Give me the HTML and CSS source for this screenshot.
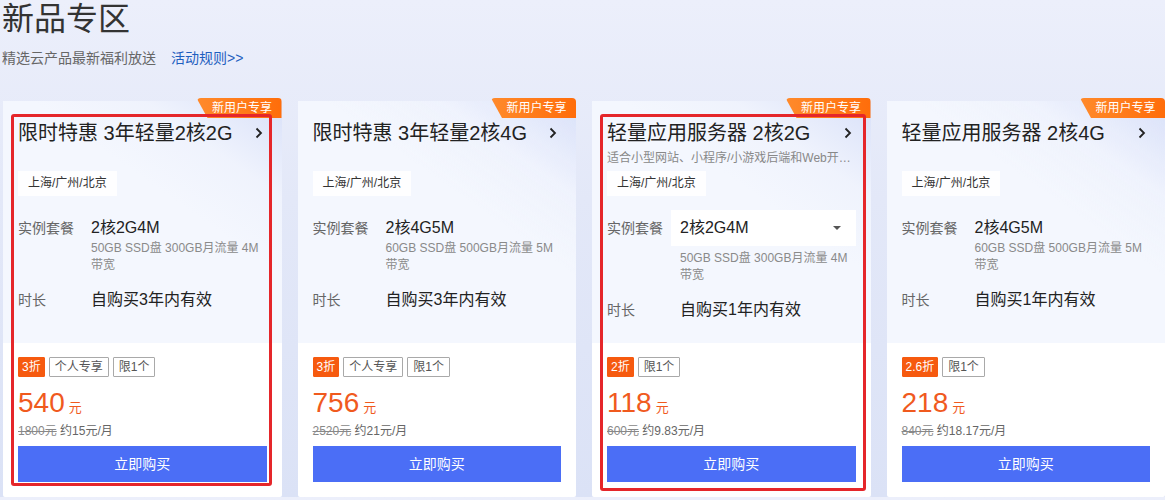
FILE: index.html
```html
<!DOCTYPE html>
<html lang="zh-CN">
<head>
    <meta charset="UTF-8">
    <meta name="viewport" content="width=device-width, initial-scale=1.0">
    <title>新品专区</title>
    <link rel="stylesheet" href="styles.css">
</head>
<body>

    <!-- Section heading -->
    <header class="section-head">
        <h1 class="section-title">新品专区</h1>
        <p class="section-sub">精选云产品最新福利放送<a class="rule-link" href="#">活动规则&gt;&gt;</a></p>
    </header>

    <!-- Product cards -->
    <div class="card-list">

        <div class="card">
            <span class="card-badge">新用户专享</span>
            <div class="card-top">
                <div class="card-head">
                    <div class="card-title">
                        <span>限时特惠 3年轻量2核2G</span>
                        <svg class="chevron" viewBox="0 0 10 12" width="10" height="12"><polyline points="2.5,1.5 7,6 2.5,10.5" /></svg>
                    </div>
                </div>
                <span class="region">上海/广州/北京</span>
                <div class="spec-row">
                    <span class="spec-label">实例套餐</span>
                    <div class="spec-body">
                        <div class="spec-value">2核2G4M</div>
                        <div class="spec-detail">50GB SSD盘 300GB月流量 4M<br>带宽</div>
                    </div>
                </div>
                <div class="spec-row">
                    <span class="spec-label">时长</span>
                    <div class="spec-body">
                        <div class="spec-value">自购买3年内有效</div>
                    </div>
                </div>
            </div>
            <div class="card-bottom">
                <div class="tags">
                    <span class="tag tag-off">3折</span>
                    <span class="tag">个人专享</span>
                    <span class="tag">限1个</span>
                </div>
                <div class="price"><span class="price-num">540</span><span class="price-unit">元</span></div>
                <div class="price-orig"><s>1800元</s> 约15元/月</div>
                <a class="buy-btn" href="#">立即购买</a>
            </div>
            <div class="highlight"></div>
        </div>

        <div class="card">
            <span class="card-badge">新用户专享</span>
            <div class="card-top">
                <div class="card-head">
                    <div class="card-title">
                        <span>限时特惠 3年轻量2核4G</span>
                        <svg class="chevron" viewBox="0 0 10 12" width="10" height="12"><polyline points="2.5,1.5 7,6 2.5,10.5" /></svg>
                    </div>
                </div>
                <span class="region">上海/广州/北京</span>
                <div class="spec-row">
                    <span class="spec-label">实例套餐</span>
                    <div class="spec-body">
                        <div class="spec-value">2核4G5M</div>
                        <div class="spec-detail">60GB SSD盘 500GB月流量 5M<br>带宽</div>
                    </div>
                </div>
                <div class="spec-row">
                    <span class="spec-label">时长</span>
                    <div class="spec-body">
                        <div class="spec-value">自购买3年内有效</div>
                    </div>
                </div>
            </div>
            <div class="card-bottom">
                <div class="tags">
                    <span class="tag tag-off">3折</span>
                    <span class="tag">个人专享</span>
                    <span class="tag">限1个</span>
                </div>
                <div class="price"><span class="price-num">756</span><span class="price-unit">元</span></div>
                <div class="price-orig"><s>2520元</s> 约21元/月</div>
                <a class="buy-btn" href="#">立即购买</a>
            </div>
        </div>

        <div class="card">
            <span class="card-badge">新用户专享</span>
            <div class="card-top">
                <div class="card-head">
                    <div class="card-title">
                        <span>轻量应用服务器 2核2G</span>
                        <svg class="chevron" viewBox="0 0 10 12" width="10" height="12"><polyline points="2.5,1.5 7,6 2.5,10.5" /></svg>
                    </div>
                    <div class="card-desc">适合小型网站、小程序/小游戏后端和Web开发测试环境</div>
                </div>
                <span class="region">上海/广州/北京</span>
                <div class="spec-row">
                    <span class="spec-label">实例套餐</span>
                    <div class="spec-body">
                        <div class="spec-value spec-select">
                            2核2G4M
                            <span class="caret"></span>
                        </div>
                        <div class="spec-detail">50GB SSD盘 300GB月流量 4M<br>带宽</div>
                    </div>
                </div>
                <div class="spec-row">
                    <span class="spec-label">时长</span>
                    <div class="spec-body">
                        <div class="spec-value">自购买1年内有效</div>
                    </div>
                </div>
            </div>
            <div class="card-bottom">
                <div class="tags">
                    <span class="tag tag-off">2折</span>
                    <span class="tag">限1个</span>
                </div>
                <div class="price"><span class="price-num">118</span><span class="price-unit">元</span></div>
                <div class="price-orig"><s>600元</s> 约9.83元/月</div>
                <a class="buy-btn" href="#">立即购买</a>
            </div>
            <div class="highlight highlight-wide"></div>
        </div>

        <div class="card">
            <span class="card-badge">新用户专享</span>
            <div class="card-top">
                <div class="card-head">
                    <div class="card-title">
                        <span>轻量应用服务器 2核4G</span>
                        <svg class="chevron" viewBox="0 0 10 12" width="10" height="12"><polyline points="2.5,1.5 7,6 2.5,10.5" /></svg>
                    </div>
                </div>
                <span class="region">上海/广州/北京</span>
                <div class="spec-row">
                    <span class="spec-label">实例套餐</span>
                    <div class="spec-body">
                        <div class="spec-value">2核4G5M</div>
                        <div class="spec-detail">60GB SSD盘 500GB月流量 5M<br>带宽</div>
                    </div>
                </div>
                <div class="spec-row">
                    <span class="spec-label">时长</span>
                    <div class="spec-body">
                        <div class="spec-value">自购买1年内有效</div>
                    </div>
                </div>
            </div>
            <div class="card-bottom">
                <div class="tags">
                    <span class="tag tag-off">2.6折</span>
                    <span class="tag">限1个</span>
                </div>
                <div class="price"><span class="price-num">218</span><span class="price-unit">元</span></div>
                <div class="price-orig"><s>840元</s> 约18.17元/月</div>
                <a class="buy-btn" href="#">立即购买</a>
            </div>
        </div>

    </div>

</body>
</html>
```

FILE: styles.css
```css
/* General body styling */
body {
    margin: 0;
    padding: 0;
    font-family: "Liberation Sans", "Noto Sans CJK SC", sans-serif;
    color: #333;
    background: linear-gradient(180deg, #eceffb 0%, #e3e8f8 40%, #dbe2f6 100%);
    overflow: hidden;
}

/* Section heading */
.section-head {
    padding-left: 2px;
}

.section-title {
    margin: 0;
    font-size: 32px;
    line-height: 38px;
    font-weight: normal;
    color: #333;
}

.section-sub {
    margin: 10px 0 0;
    font-size: 14px;
    line-height: 20px;
    color: #666;
}

.rule-link {
    margin-left: 15px;
    color: #1f5fbf;
    text-decoration: none;
}

/* Card grid */
.card-list {
    display: grid;
    grid-template-columns: repeat(4, minmax(0, 1fr));
    gap: 16px;
    padding-left: 3px;
    margin-top: 33px;
}

.card {
    position: relative;
    min-width: 0;
    background-color: #fff;
    border-radius: 2px;
}

/* Orange corner badge */
.card-badge {
    position: absolute;
    top: -3px;
    right: 0;
    width: 85px;
    height: 20px;
    line-height: 20px;
    padding-left: 6px;
    box-sizing: border-box;
    text-align: center;
    font-size: 12px;
    color: #fff;
    background: linear-gradient(90deg, #ff8a2b, #ff6d0a);
    border-radius: 4px 4px 0 0;
    clip-path: polygon(0 0, 100% 0, 100% 100%, 11px 100%);
    z-index: 2;
}

/* Upper, light blue part */
.card-top {
    height: 242px;
    box-sizing: border-box;
    padding: 18px 15px 0;
    background:
        linear-gradient(215deg, rgba(214, 222, 248, 0.9) 0%, rgba(236, 240, 252, 0.6) 22%, rgba(244, 247, 254, 0) 40%),
        #f4f7fe;
}

.card-head {
    height: 52px;
}

.card-title {
    display: flex;
    align-items: center;
    justify-content: space-between;
    font-size: 20px;
    line-height: 28px;
    color: #222;
}

.chevron {
    margin-right: 3px;
    fill: none;
    stroke: #222;
    stroke-width: 1.8;
}

.card-desc {
    margin-top: 3px;
    font-size: 12px;
    line-height: 16px;
    color: #888;
    white-space: nowrap;
    overflow: hidden;
    text-overflow: ellipsis;
}

.region {
    display: block;
    width: fit-content;
    padding: 0 10px;
    font-size: 12px;
    line-height: 25px;
    color: #333;
    background-color: rgba(255, 255, 255, 0.85);
}

/* Spec rows */
.spec-row {
    display: flex;
    margin-top: 14px;
}

.region + .spec-row {
    margin-top: 20px;
}

.spec-label {
    width: 73px;
    flex-shrink: 0;
    font-size: 14px;
    line-height: 24px;
    color: #666;
}

.spec-body {
    flex: 1;
    min-width: 0;
}

.spec-value {
    font-size: 16px;
    line-height: 24px;
    color: #222;
}

.spec-select {
    display: flex;
    align-items: center;
    justify-content: space-between;
    height: 36px;
    margin: -6px 0 0 -9px;
    padding: 0 15px 0 9px;
    background-color: #fff;
}

.caret {
    width: 0;
    height: 0;
    border-left: 4px solid transparent;
    border-right: 4px solid transparent;
    border-top: 4px solid #555;
}

.spec-detail {
    font-size: 12px;
    line-height: 17px;
    color: #8a8a8a;
    white-space: nowrap;
}

.spec-select + .spec-detail {
    margin-top: 4px;
}

/* Lower, white part */
.card-bottom {
    padding: 14px 15px 15px;
}

.tags {
    display: flex;
    gap: 4px;
}

.tag {
    height: 20px;
    box-sizing: border-box;
    padding: 0 5px;
    font-size: 12px;
    line-height: 18px;
    color: #555;
    border: 1px solid #a9a9a9;
    border-radius: 1px;
}

.tag-off {
    padding: 0 3px;
    color: #fff;
    background-color: #f65a0f;
    border-color: #f65a0f;
}

.price {
    margin-top: 10px;
    line-height: 32px;
    color: #f05a1e;
}

.price-num {
    font-size: 28px;
}

.price-unit {
    margin-left: 4px;
    font-size: 13px;
}

.price-orig {
    margin-top: -1px;
    font-size: 12px;
    line-height: 16px;
    color: #666;
}

.price-orig s {
    color: #888;
}

.buy-btn {
    display: block;
    margin-top: 7px;
    height: 36px;
    line-height: 36px;
    text-align: center;
    font-size: 14px;
    color: #fff;
    text-decoration: none;
    background-color: #4b6ef6;
}

/* Red highlight frame drawn over a card */
.highlight {
    position: absolute;
    top: 13px;
    left: 8px;
    right: 10px;
    bottom: 11px;
    border: 3px solid #e5262a;
    border-radius: 3px;
    pointer-events: none;
    z-index: 3;
}

.highlight-wide {
    right: 5px;
    bottom: 6px;
}
```
